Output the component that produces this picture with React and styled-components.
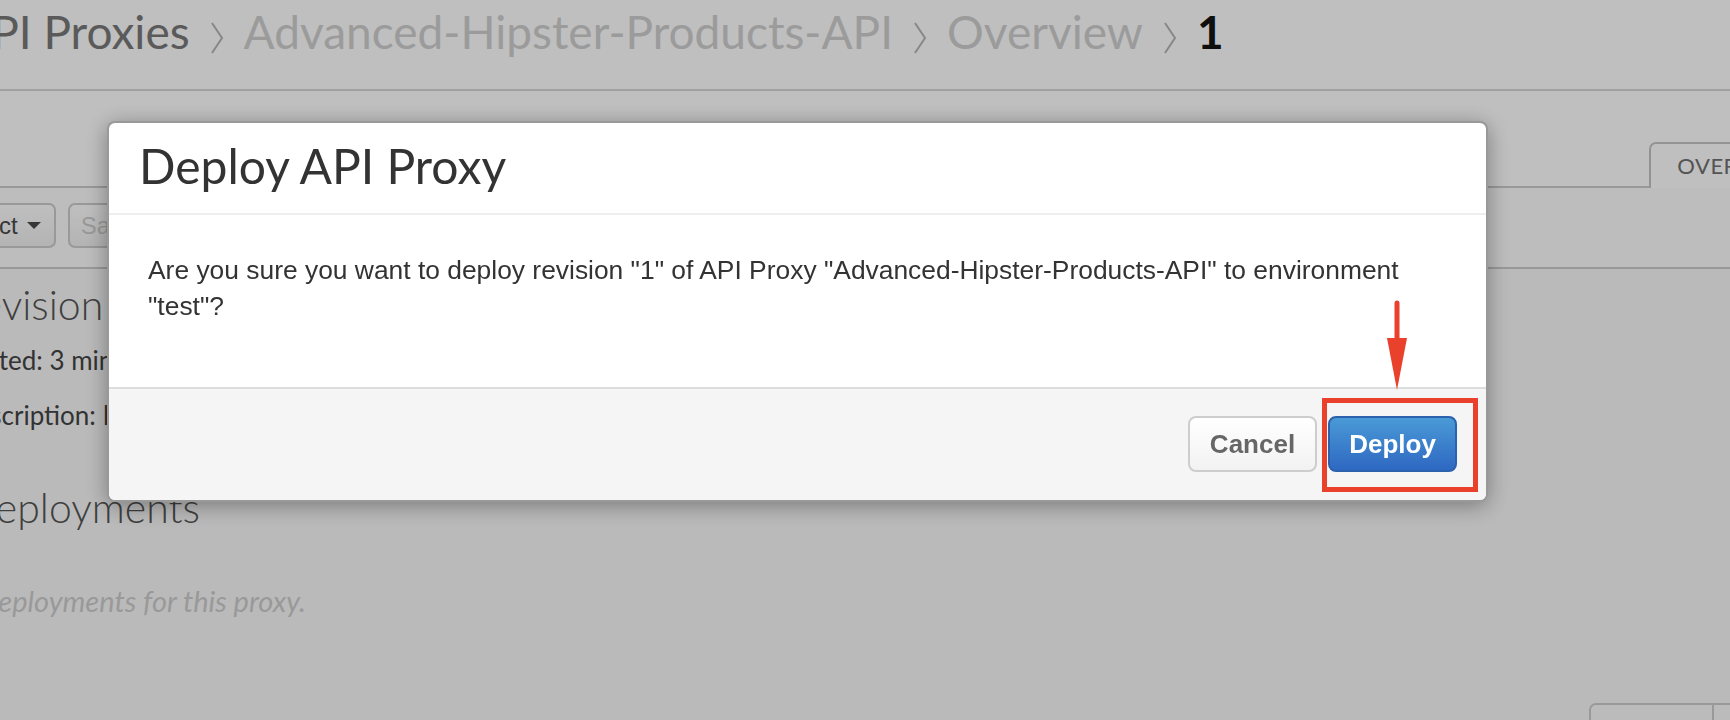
import styled, { createGlobalStyle } from "styled-components"

const GlobalStyle = createGlobalStyle`
    html, body {
        margin: 0;
        padding: 0;
        height: 720px;
        overflow: hidden;
        background: #ffffff;
        font-family: "Lato", "Noto Sans", sans-serif;
    }
`

const Page = styled.div`
    width: 1920px;
    margin-left: -80px;
    height: 720px;
    display: flex;
    flex-direction: column;
    background: #f9f9f9;

    & > * {
        flex: none;
    }
`

const Cabecalho = styled.div`
    height: 87px;
    padding: 2px 0 0 40px;
    border-bottom: 2px solid #d6d6d6;
    background: #ffffff;
    display: flex;
    align-items: flex-start;
    gap: 20px;
    font-size: 46px;
    line-height: 60px;
`

const Migalha = styled.span`
    color: ${props => props.$cor};
    font-weight: ${props => props.$negrito ? 700 : 400};
    white-space: nowrap;
`

const Seta = styled.svg`
    width: 14px;
    height: 32px;
    margin-top: 20px;
    flex: none;
`

const BarraAbas = styled.div`
    height: 95px;
    background: #ffffff;
    border-bottom: 2px solid #cccccc;
    display: flex;
    justify-content: flex-end;
    align-items: flex-end;
    padding-right: 16px;
`

const Aba = styled.div`
    height: 44px;
    margin-bottom: -2px;
    padding: 0 26px;
    border: 2px solid #c4c4c4;
    border-bottom: none;
    border-radius: 7px 7px 0 0;
    background: #ffffff;
    color: #707070;
    font-size: 22px;
    line-height: 44px;
    letter-spacing: 0.5px;
`

const BarraFerramentas = styled.div`
    height: 64px;
    padding: 15px 0 0 10px;
    border-bottom: 2px solid #cccccc;
    background: #fdfdfd;
    display: flex;
    align-items: flex-start;
    gap: 12px;
`

const BotaoPagina = styled.div`
    height: 41px;
    display: flex;
    align-items: center;
    gap: 9px;
    padding: 0 13px 0 11px;
    border: 2px solid #cccccc;
    border-radius: 7px;
    background: linear-gradient(#ffffff, #f0f0f0);
    font-family: "Liberation Sans", Arial, sans-serif;
    font-size: 24px;
    color: ${props => props.$desativado ? "#cccccc" : "#4a4a4a"};
`

const Triangulo = styled.span`
    width: 0;
    height: 0;
    border-left: 7px solid transparent;
    border-right: 7px solid transparent;
    border-top: 7px solid #4a4a4a;
`

const Conteudo = styled.div`
    display: flex;
    flex-direction: column;
    color: #4a4a4a;
`

const TituloSecao = styled.h2`
    margin: ${props => props.$topo}px 0 0 ${props => props.$recuo}px;
    font-size: 41px;
    font-weight: 300;
    line-height: 52px;
    color: #555555;
`

const Linha = styled.p`
    margin: ${props => props.$topo}px 0 0 ${props => props.$recuo}px;
    font-size: 26px;
    line-height: 36px;
    color: #444444;
    white-space: nowrap;
`

const Vazio = styled.p`
    margin: 49px 0 0 21px;
    font-size: 29px;
    line-height: 36px;
    font-style: italic;
    color: #cdcdcd;
`

const AcoesRodape = styled.div`
    margin-top: 84px;
    display: flex;
    padding-left: 1669px;
`

const GrupoBotoes = styled.div`
    display: flex;
    height: 46px;
    border: 2px solid #cccccc;
    border-radius: 7px;
    background: #fafafa;
    overflow: hidden;
`

const BotaoGrupo = styled.div`
    padding: 12px 13px 0;
    font-family: "Liberation Sans", Arial, sans-serif;
    font-size: 20px;
    color: #333333;
    white-space: nowrap;
    & + & { border-left: 2px solid #cccccc; }
`

const Fundo = styled.div`
    position: fixed;
    inset: 0;
    background: rgba(0, 0, 0, 0.25);
`

const Modal = styled.div`
    position: fixed;
    left: 107px;
    top: 121px;
    width: 1377px;
    border: 2px solid rgba(0, 0, 0, 0.4);
    border-radius: 8px;
    background: #ffffff;
    box-shadow: 0 4px 22px rgba(0, 0, 0, 0.35);
`

const ModalCabecalho = styled.div`
    padding: 15px 30px 19px;
    border-bottom: 2px solid #eeeeee;
`

const ModalTitulo = styled.h3`
    margin: 0;
    font-family: "Lato", sans-serif;
    font-weight: 400;
    font-size: 48px;
    line-height: 56px;
    color: #333333;
`

const ModalCorpo = styled.div`
    padding: 37px 39px 63px;
    font-family: "Liberation Sans", Arial, sans-serif;
    font-size: 26.4px;
    line-height: 36px;
    color: #333333;
`

const ModalRodape = styled.div`
    display: flex;
    justify-content: flex-end;
    gap: 11px;
    padding: 27px 29px 28px;
    border-top: 2px solid #dddddd;
    background: #f5f5f5;
    border-radius: 0 0 6px 6px;
`

const Botao = styled.button`
    height: 56px;
    width: 129px;
    padding: 0;
    border-radius: 8px;
    font-family: "Liberation Sans", Arial, sans-serif;
    font-weight: 700;
    font-size: 26px;
    cursor: pointer;
    border: 2px solid ${props => props.$primario ? "#2c62ad" : "#cdcdcd"};
    color: ${props => props.$primario ? "#ffffff" : "#666666"};
    background: ${props => props.$primario
        ? "linear-gradient(#4a9ad6, #2e68c2)"
        : "linear-gradient(#ffffff, #f2f2f2)"};
`

const Destaque = styled.div`
    position: fixed;
    left: 1322px;
    top: 398px;
    width: 146px;
    height: 84px;
    border: 5px solid #e9412b;
`

const Flecha = styled.svg`
    position: fixed;
    left: 1387px;
    top: 300px;
    width: 20px;
    height: 92px;
`

function Chevron() {
    return (
        <Seta viewBox="0 0 14 32">
            <polyline points="2,1 12,16 2,31" fill="none" stroke="#b5b5b5" strokeWidth="2" />
        </Seta>
    )
}

export default function App() {
    return (
        <>
            <GlobalStyle />
            <Page>
                <Cabecalho>
                    <Migalha $cor="#787878">API Proxies</Migalha>
                    <Chevron />
                    <Migalha $cor="#cfcfcf">Advanced-Hipster-Products-API</Migalha>
                    <Chevron />
                    <Migalha $cor="#cfcfcf">Overview</Migalha>
                    <Chevron />
                    <Migalha $cor="#151515" $negrito>1</Migalha>
                </Cabecalho>
                <BarraAbas>
                    <Aba>OVERVIEW</Aba>
                </BarraAbas>
                <BarraFerramentas>
                    <BotaoPagina>Project <Triangulo /></BotaoPagina>
                    <BotaoPagina $desativado>Save</BotaoPagina>
                </BarraFerramentas>
                <Conteudo>
                    <TituloSecao $topo={10} $recuo={37}>Revision 1</TituloSecao>
                    <Linha $topo={11} $recuo={26}>Created: 3 minutes ago</Linha>
                    <Linha $topo={19} $recuo={37}>Description: Proxy for Advanced Hipster Products</Linha>
                    <TituloSecao $topo={49} $recuo={45}>Deployments</TituloSecao>
                    <Vazio>No deployments for this proxy.</Vazio>
                    <AcoesRodape>
                        <GrupoBotoes>
                            <BotaoGrupo>Expand All</BotaoGrupo>
                            <BotaoGrupo>Collapse All</BotaoGrupo>
                        </GrupoBotoes>
                    </AcoesRodape>
                </Conteudo>
            </Page>
            <Fundo />
            <Modal>
                <ModalCabecalho>
                    <ModalTitulo>Deploy API Proxy</ModalTitulo>
                </ModalCabecalho>
                <ModalCorpo>
                    Are you sure you want to deploy revision "1" of API Proxy "Advanced-Hipster-Products-API" to environment "test"?
                </ModalCorpo>
                <ModalRodape>
                    <Botao>Cancel</Botao>
                    <Botao $primario>Deploy</Botao>
                </ModalRodape>
            </Modal>
            <Destaque />
            <Flecha viewBox="0 0 20 92">
                <line x1="10" y1="3" x2="10" y2="42" stroke="#e9412b" strokeWidth="5" strokeLinecap="round" />
                <polygon points="0,38 20,38 10,90" fill="#e9412b" />
            </Flecha>
        </>
    )
}
